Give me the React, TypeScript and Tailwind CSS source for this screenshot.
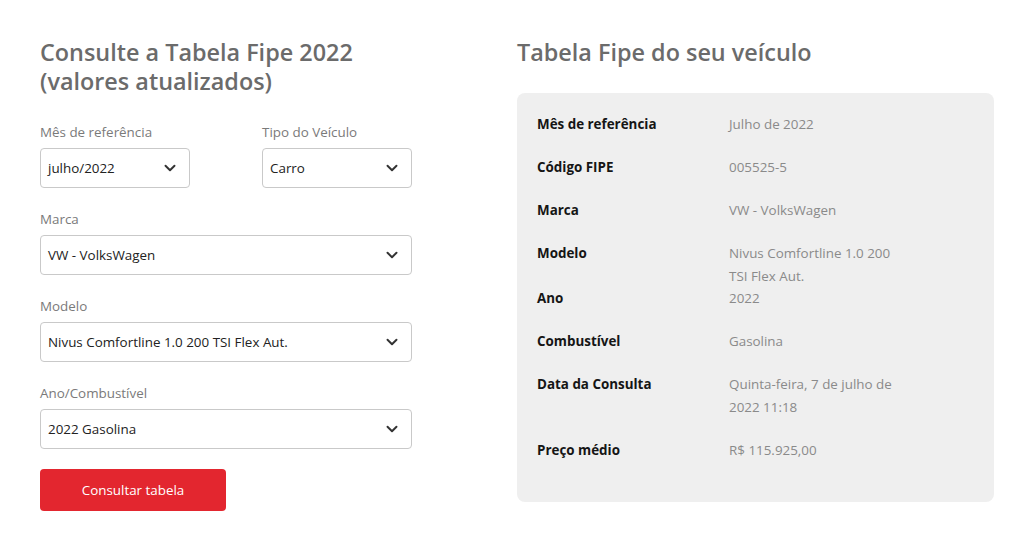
import { ChevronDown } from "lucide-react";

const font = { fontFamily: '"Open Sans", "Liberation Sans", sans-serif' };

const SelectBox = ({ value }: { value: string }) => (
  <div className="flex h-10 w-full items-center justify-between rounded border border-[#c9c9c9] bg-white pl-[7px] pr-[10px] text-[13.4px] text-[#222]">
    <span>{value}</span>
    <ChevronDown size={18} strokeWidth={2.6} className="text-[#333]" />
  </div>
);

const Field = ({ label, value }: { label: string; value: string }) => (
  <div className="mb-[19px]">
    <div className="mb-[6px] pt-[2px] text-[13.4px] leading-5 text-[#7a7a7a]">{label}</div>
    <SelectBox value={value} />
  </div>
);

const rows: { label: string; value: string[]; tight?: boolean }[] = [
  { label: "Mês de referência", value: ["Julho de 2022"] },
  { label: "Código FIPE", value: ["005525-5"] },
  { label: "Marca", value: ["VW - VolksWagen"] },
  { label: "Modelo", value: ["Nivus Comfortline 1.0 200", "TSI Flex Aut."], tight: true },
  { label: "Ano", value: ["2022"] },
  { label: "Combustível", value: ["Gasolina"] },
  { label: "Data da Consulta", value: ["Quinta-feira, 7 de julho de", "2022 11:18"] },
  { label: "Preço médio", value: ["R$ 115.925,00"] },
];

export default function App() {
  return (
    <div style={font} className="flex min-h-[533px] w-[1024px] bg-white pl-10 pt-[38px]">
      <div className="w-[372px]">
        <h1 className="mb-6 text-[23.4px] font-semibold leading-[29px] text-[#6b6b6b]">
          Consulte a Tabela Fipe 2022
          <br />
          (valores atualizados)
        </h1>
        <div className="flex gap-[72px]">
          <div className="w-[150px]">
            <Field label="Mês de referência" value="julho/2022" />
          </div>
          <div className="w-[150px]">
            <Field label="Tipo do Veículo" value="Carro" />
          </div>
        </div>
        <Field label="Marca" value="VW - VolksWagen" />
        <Field label="Modelo" value="Nivus Comfortline 1.0 200 TSI Flex Aut." />
        <Field label="Ano/Combustível" value="2022 Gasolina" />
        <button className="mt-px h-[42px] w-[186px] rounded bg-[#e3262f] text-[13.4px] text-white">
          Consultar tabela
        </button>
      </div>
      <div className="ml-[105px] w-[477px]">
        <h2 className="mb-[26px] text-[23.4px] font-semibold leading-[29px] text-[#6b6b6b]">
          Tabela Fipe do seu veículo
        </h2>
        <div className="rounded-lg bg-[#efefef] px-5 pb-5 pt-5">
          {rows.map((r) => (
            <div key={r.label} className={`flex text-[13.4px] leading-[22.5px] ${r.tight ? "mb-0" : "mb-[20.5px]"}`}>
              <div className="w-[192px] font-bold text-[#151515]">{r.label}</div>
              <div className="w-[172px] text-[#8a8a8a]">
                {r.value.map((v) => (
                  <div key={v}>{v}</div>
                ))}
              </div>
            </div>
          ))}
        </div>
      </div>
    </div>
  );
}
